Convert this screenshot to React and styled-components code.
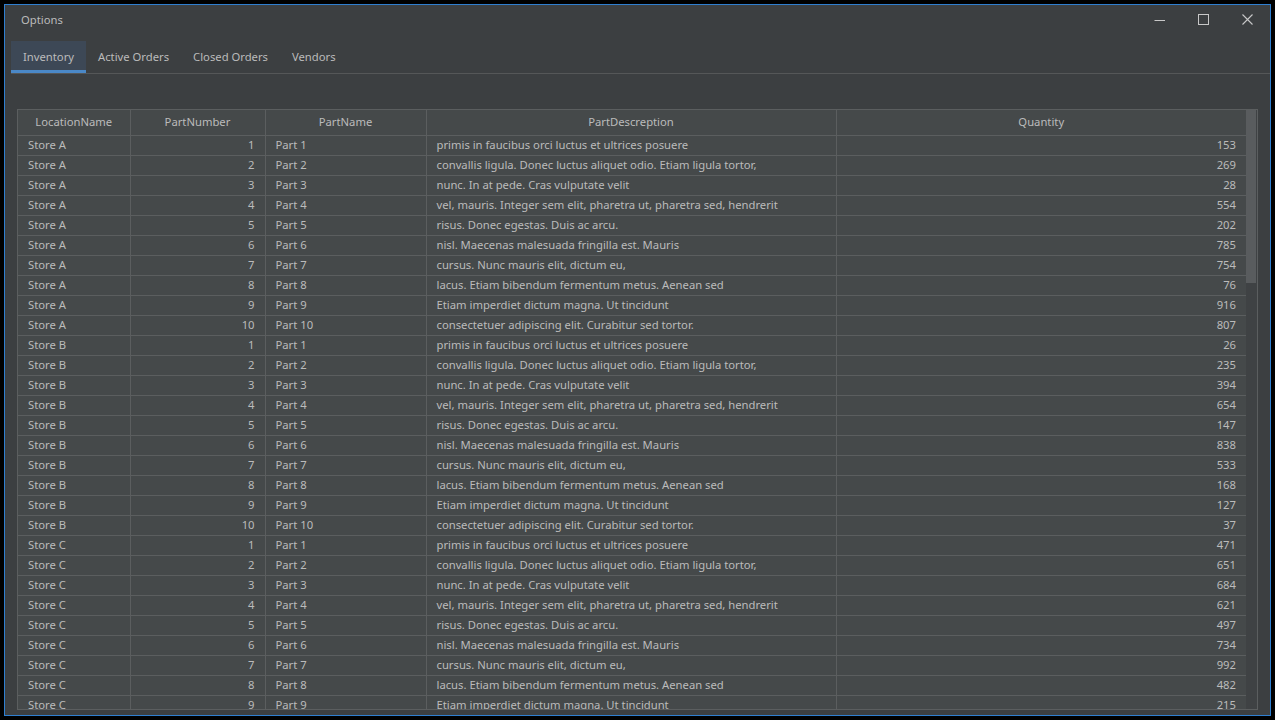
import React from "react";
import styled, { createGlobalStyle } from "styled-components";

const Global = createGlobalStyle`
  html, body { margin: 0; padding: 0; background: #000; }
  body { font-family: "Noto Sans", "Open Sans", sans-serif; font-size: 11.25px; color: #bbbbbb; }
  * { box-sizing: border-box; }
`;

const Window = styled.div`
  margin: 4px;
  width: 1267px;
  height: 712px;
  border: 1px solid #2f7fd0;
  background: #3c3f41;
  display: flex;
  flex-direction: column;
`;

const TitleBar = styled.div`
  height: 36px;
  display: flex;
  align-items: center;
  padding-left: 16px;
`;

const Title = styled.div`
  flex: 1;
  color: #bbbbbb;
  font-size: 11.25px;
  margin-top: -8px;
`;

const WinButton = styled.button`
  width: 44px;
  height: 30px;
  margin-top: -6px;
  background: transparent;
  border: none;
  padding: 0;
  display: flex;
  align-items: center;
  justify-content: center;
  color: #c8c8c8;
`;

const TabBar = styled.div`
  display: flex;
  margin-left: 6px;
  border-bottom: 1px solid #555758;
  height: 33px;
`;

const Tab = styled.div`
  height: 32px;
  padding: 1px 12px 0;
  display: flex;
  align-items: center;
  color: #bbbbbb;
  font-size: 11.25px;
  background: ${(p) => (p.$active ? "#3d4856" : "transparent")};
  border-bottom: 3px solid ${(p) => (p.$active ? "#4a88c7" : "transparent")};
`;

const Content = styled.div`
  flex: 1;
  padding: 35px 12px 5px 12px;
  display: flex;
  min-height: 0;
`;

const TableFrame = styled.div`
  flex: 1;
  border: 1px solid #5b5e5f;
  background: #45494a;
  display: flex;
  overflow: hidden;
`;

const TableArea = styled.div`
  flex: 1;
  overflow: hidden;
`;

const Table = styled.table`
  border-collapse: collapse;
  table-layout: fixed;
  width: 1228px;
`;

const HeadCell = styled.th`
  height: 25px;
  font-weight: normal;
  color: #bbbbbb;
  text-align: center;
  padding: 0 6px 1px;
  border-right: 1px solid #5b5e5f;
  border-bottom: 1px solid #5b5e5f;
  font-size: 11.25px;
  &:last-child { border-right: none; }
`;

const Cell = styled.td`
  height: 20px;
  padding: 0 10px 2px;
  color: #bbbbbb;
  font-size: 11.25px;
  white-space: nowrap;
  overflow: hidden;
  text-align: ${(p) => (p.$num ? "right" : "left")};
  border-right: 1px solid #5b5e5f;
  border-bottom: 1px solid #5b5e5f;
  &:last-child { border-right: none; }
`;

const ScrollTrack = styled.div`
  width: 11px;
  background: #3f4244;
  display: flex;
  flex-direction: column;
`;

const ScrollThumb = styled.div`
  height: 173px;
  margin-right: 1px;
  background: #595c5e;
`;

const descs = [
  "primis in faucibus orci luctus et ultrices posuere",
  "convallis ligula. Donec luctus aliquet odio. Etiam ligula tortor,",
  "nunc. In at pede. Cras vulputate velit",
  "vel, mauris. Integer sem elit, pharetra ut, pharetra sed, hendrerit",
  "risus. Donec egestas. Duis ac arcu.",
  "nisl. Maecenas malesuada fringilla est. Mauris",
  "cursus. Nunc mauris elit, dictum eu,",
  "lacus. Etiam bibendum fermentum metus. Aenean sed",
  "Etiam imperdiet dictum magna. Ut tincidunt",
  "consectetuer adipiscing elit. Curabitur sed tortor.",
];

const qty = {
  A: [153, 269, 28, 554, 202, 785, 754, 76, 916, 807],
  B: [26, 235, 394, 654, 147, 838, 533, 168, 127, 37],
  C: [471, 651, 684, 621, 497, 734, 992, 482, 215, 318],
};

const rows = [];
["A", "B", "C"].forEach((s) => {
  for (let i = 0; i < 10; i++) {
    rows.push({ loc: `Store ${s}`, num: i + 1, name: `Part ${i + 1}`, desc: descs[i], q: qty[s][i] });
  }
});

const widths = [112, 135, 161, 410, 410];
const headers = ["LocationName", "PartNumber", "PartName", "PartDescreption", "Quantity"];

export default function App() {
  return (
    <>
      <Global />
      <Window>
        <TitleBar>
          <Title>Options</Title>
          <WinButton aria-label="minimize">
            <svg width="12" height="12" viewBox="0 0 12 12">
              <line x1="0.5" y1="6.5" x2="11" y2="6.5" stroke="currentColor" strokeWidth="1" />
            </svg>
          </WinButton>
          <WinButton aria-label="maximize">
            <svg width="12" height="12" viewBox="0 0 12 12">
              <rect x="0.5" y="0.5" width="10" height="10" fill="none" stroke="currentColor" strokeWidth="1" />
            </svg>
          </WinButton>
          <WinButton aria-label="close">
            <svg width="12" height="12" viewBox="0 0 12 12">
              <path d="M0.5 0.5 L10.5 10.5 M10.5 0.5 L0.5 10.5" stroke="currentColor" strokeWidth="1.1" />
            </svg>
          </WinButton>
        </TitleBar>
        <TabBar>
          <Tab $active>Inventory</Tab>
          <Tab>Active Orders</Tab>
          <Tab>Closed Orders</Tab>
          <Tab>Vendors</Tab>
        </TabBar>
        <Content>
          <TableFrame>
            <TableArea>
              <Table>
                <colgroup>
                  {widths.map((w, i) => (
                    <col key={i} style={{ width: w }} />
                  ))}
                </colgroup>
                <thead>
                  <tr>
                    {headers.map((h) => (
                      <HeadCell key={h}>{h}</HeadCell>
                    ))}
                  </tr>
                </thead>
                <tbody>
                  {rows.map((r, i) => (
                    <tr key={i}>
                      <Cell>{r.loc}</Cell>
                      <Cell $num>{r.num}</Cell>
                      <Cell>{r.name}</Cell>
                      <Cell>{r.desc}</Cell>
                      <Cell $num>{r.q}</Cell>
                    </tr>
                  ))}
                </tbody>
              </Table>
            </TableArea>
            <ScrollTrack>
              <ScrollThumb />
            </ScrollTrack>
          </TableFrame>
        </Content>
      </Window>
    </>
  );
}
